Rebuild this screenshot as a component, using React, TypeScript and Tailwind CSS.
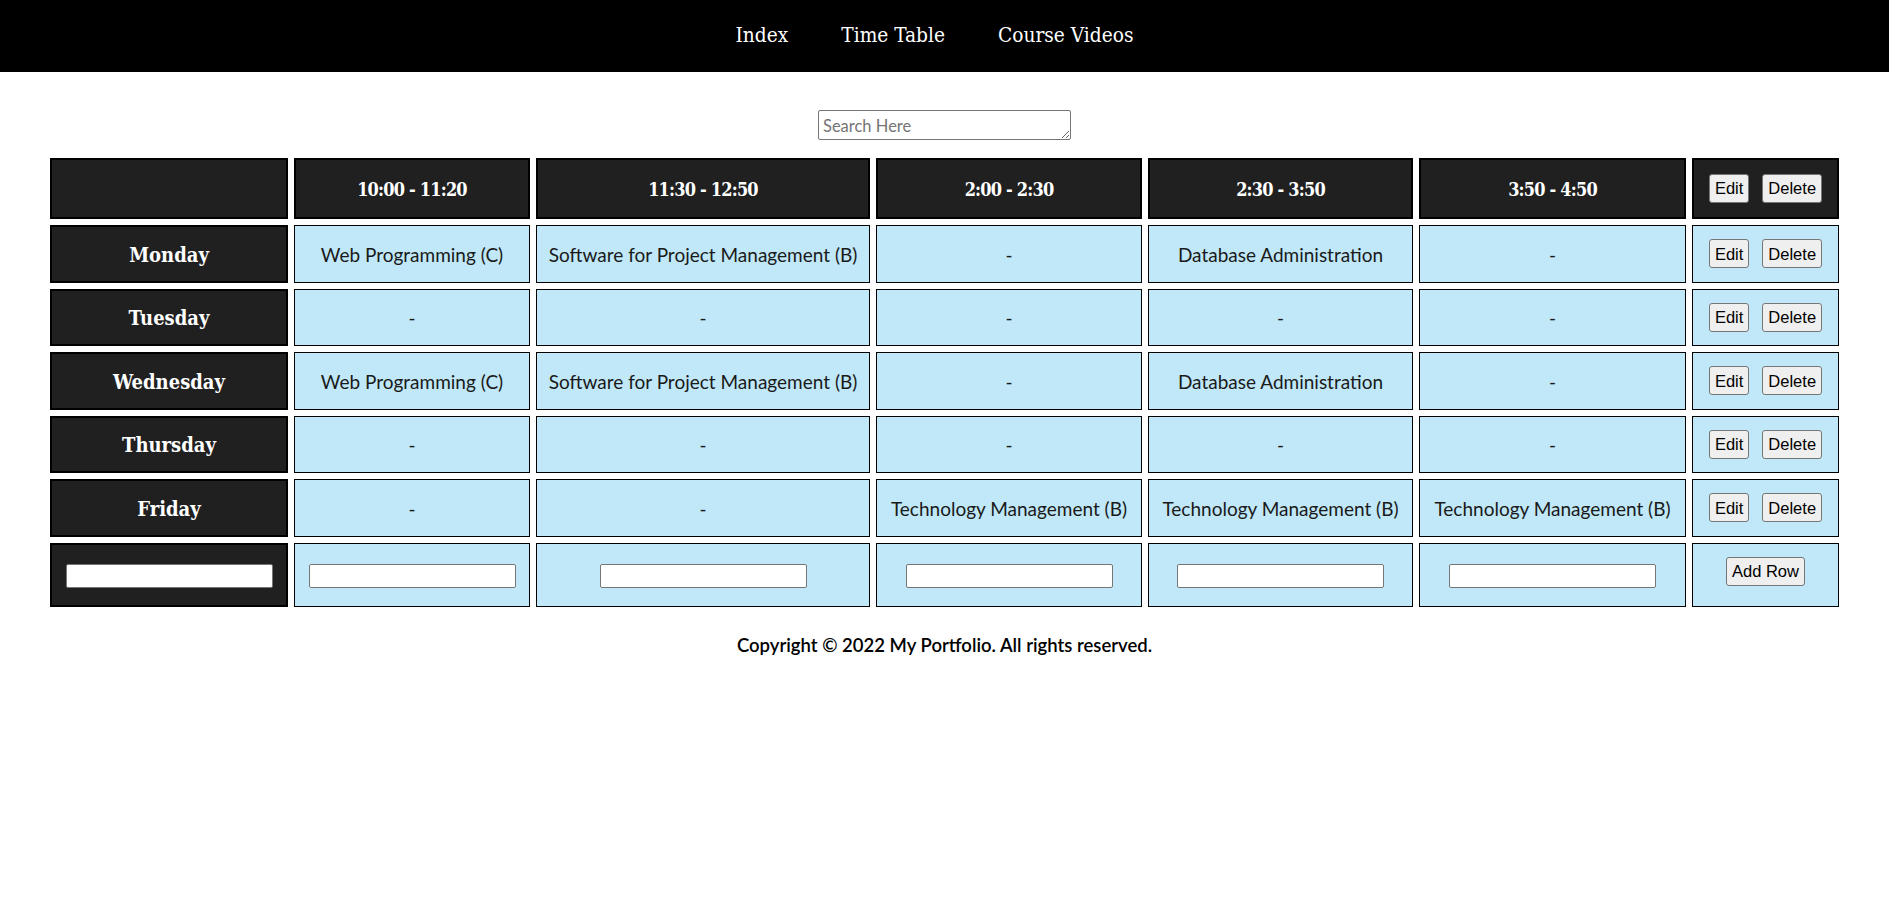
import React from "react";

const rows: { day: string; cells: string[] }[] = [
  { day: "Monday", cells: ["Web Programming (C)", "Software for Project Management (B)", "-", "Database Administration", "-"] },
  { day: "Tuesday", cells: ["-", "-", "-", "-", "-"] },
  { day: "Wednesday", cells: ["Web Programming (C)", "Software for Project Management (B)", "-", "Database Administration", "-"] },
  { day: "Thursday", cells: ["-", "-", "-", "-", "-"] },
  { day: "Friday", cells: ["-", "-", "Technology Management (B)", "Technology Management (B)", "Technology Management (B)"] },
];

const times = ["10:00 - 11:20", "11:30 - 12:50", "2:00 - 2:30", "2:30 - 3:50", "3:50 - 4:50"];
const widths = ["w-[236px]", "w-[334px]", "w-[266px]", "w-[265px]", "w-[267px]"];

function Btn({ children }: { children: React.ReactNode }) {
  return (
    <button className="h-[29px] px-[5px] border border-[#767676] rounded-[3px] bg-[#efefef] text-black text-[16.5px] leading-none font-['Liberation_Sans',Arial,sans-serif]">
      {children}
    </button>
  );
}

function Actions() {
  return (
    <div className="flex justify-center items-center gap-[13px]">
      <Btn>Edit</Btn>
      <Btn>Delete</Btn>
    </div>
  );
}

function TextInput() {
  return (
    <input
      type="text"
      className="w-[207px] h-[24px] bg-white border border-[#767676] rounded-[2px] align-middle"
    />
  );
}

export default function App() {
  const th = "bg-[#202020] border-2 border-black text-white text-center font-bold text-[20px] font-['DejaVu_Serif_Condensed','DejaVu_Serif',serif]";
  const thTime = "bg-[#202020] border-2 border-black text-white text-center font-bold text-[18px] tracking-[-0.8px] pt-[2px] font-['DejaVu_Serif_Condensed','DejaVu_Serif',serif]";
  const td = "bg-[#c0e8f8] border border-black text-center text-[#1a1a1a] text-[19px]";
  return (
    <div className="min-h-screen bg-white font-['Lato','Noto_Sans',sans-serif]">
      <nav className="h-[72px] bg-black flex items-center justify-center gap-[53px] pr-[20px] text-white text-[20.7px] font-['DejaVu_Serif_Condensed','DejaVu_Serif',serif]">
        <a>Index</a>
        <a>Time Table</a>
        <a>Course Videos</a>
      </nav>
      <div className="flex justify-center pt-[38px]">
        <textarea
          rows={1}
          placeholder="Search Here"
          className="block w-[253px] h-[30px] border border-[#767676] rounded-[2px] px-[4px] pt-[5px] pb-0 text-[16.5px] leading-[20px] placeholder:text-[#757575] resize"
        />
      </div>
      <table className="mt-[12px] mx-auto w-[1801px] table-fixed border-separate border-spacing-[6px]">
        <thead>
          <tr className="h-[61px]">
            <th className={`${th} w-[238px]`}></th>
            {times.map((t, i) => (
              <th key={t} className={`${thTime} ${widths[i]}`}>{t}</th>
            ))}
            <th className={`${th} w-[147px] font-normal`}>
              <Actions />
            </th>
          </tr>
        </thead>
        <tbody>
          {rows.map((r) => (
            <tr key={r.day} className="h-[57.5px]">
              <th className={`${th} pt-[2px]`}>{r.day}</th>
              {r.cells.map((c, i) => (
                <td key={i} className={`${td} pt-[2px]`}>{c}</td>
              ))}
              <td className={td}>
                <Actions />
              </td>
            </tr>
          ))}
          <tr className="h-[64px]">
            <th className={th}>
              <TextInput />
            </th>
            {[0, 1, 2, 3, 4].map((i) => (
              <td key={i} className={td}>
                <TextInput />
              </td>
            ))}
            <td className={td}>
              <div className="flex justify-center pb-[6px]">
                <Btn>Add Row</Btn>
              </div>
            </td>
          </tr>
        </tbody>
      </table>
      <footer className="mt-[20px] text-center text-[18.5px] font-semibold text-black leading-[25px]">
        Copyright © 2022 My Portfolio. All rights reserved.
      </footer>
    </div>
  );
}
